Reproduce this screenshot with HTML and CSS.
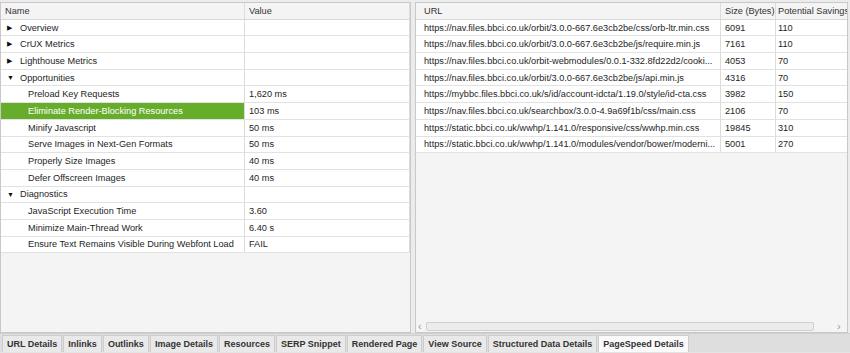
FILE: index.html
```html
<!DOCTYPE html>
<html lang="en">
<head>
  <meta charset="UTF-8" />
  <title>PageSpeed Details</title>
  <link rel="stylesheet" href="styles.css">
</head>
<body>
  <div class="main">
    <div class="panel left">
      <div class="grid tree">
        <div class="row head"><span>Name</span><span>Value</span></div>
        <div class="row"><span class="group"><i class="arrow">&#9654;</i>Overview</span><span></span></div>
        <div class="row"><span class="group"><i class="arrow">&#9654;</i>CrUX Metrics</span><span></span></div>
        <div class="row"><span class="group"><i class="arrow">&#9654;</i>Lighthouse Metrics</span><span></span></div>
        <div class="row"><span class="group"><i class="arrow down">&#9660;</i>Opportunities</span><span></span></div>
        <div class="row"><span class="child">Preload Key Requests</span><span>1,620 ms</span></div>
        <div class="row"><span class="child selected">Eliminate Render-Blocking Resources</span><span>103 ms</span></div>
        <div class="row"><span class="child">Minify Javascript</span><span>50 ms</span></div>
        <div class="row"><span class="child">Serve Images in Next-Gen Formats</span><span>50 ms</span></div>
        <div class="row"><span class="child">Properly Size Images</span><span>40 ms</span></div>
        <div class="row"><span class="child">Defer Offscreen Images</span><span>40 ms</span></div>
        <div class="row"><span class="group"><i class="arrow down">&#9660;</i>Diagnostics</span><span></span></div>
        <div class="row"><span class="child">JavaScript Execution Time</span><span>3.60</span></div>
        <div class="row"><span class="child">Minimize Main-Thread Work</span><span>6.40 s</span></div>
        <div class="row"><span class="child">Ensure Text Remains Visible During Webfont Load</span><span>FAIL</span></div>
      </div>
    </div>

    <div class="panel right">
      <div class="grid urls">
        <div class="row head"><span>URL</span><span>Size (Bytes)</span><span>Potential Savings</span></div>
        <div class="row"><span>https://nav.files.bbci.co.uk/orbit/3.0.0-667.6e3cb2be/css/orb-ltr.min.css</span><span>6091</span><span>110</span></div>
        <div class="row"><span>https://nav.files.bbci.co.uk/orbit/3.0.0-667.6e3cb2be/js/require.min.js</span><span>7161</span><span>110</span></div>
        <div class="row"><span>https://nav.files.bbci.co.uk/orbit-webmodules/0.0.1-332.8fd22d2/cooki...</span><span>4053</span><span>70</span></div>
        <div class="row"><span>https://nav.files.bbci.co.uk/orbit/3.0.0-667.6e3cb2be/js/api.min.js</span><span>4316</span><span>70</span></div>
        <div class="row"><span>https://mybbc.files.bbci.co.uk/s/id/account-idcta/1.19.0/style/id-cta.css</span><span>3982</span><span>150</span></div>
        <div class="row"><span>https://nav.files.bbci.co.uk/searchbox/3.0.0-4.9a69f1b/css/main.css</span><span>2106</span><span>70</span></div>
        <div class="row"><span>https://static.bbci.co.uk/wwhp/1.141.0/responsive/css/wwhp.min.css</span><span>19845</span><span>310</span></div>
        <div class="row"><span>https://static.bbci.co.uk/wwhp/1.141.0/modules/vendor/bower/moderni...</span><span>5001</span><span>270</span></div>
      </div>
      <div class="hscroll">
        <span class="sarrow">&#8249;</span>
        <div class="track"><div class="thumb"></div></div>
        <span class="sarrow">&#8250;</span>
      </div>
    </div>
  </div>

  <div class="tabs">
    <span class="tab">URL Details</span>
    <span class="tab">Inlinks</span>
    <span class="tab">Outlinks</span>
    <span class="tab">Image Details</span>
    <span class="tab">Resources</span>
    <span class="tab">SERP Snippet</span>
    <span class="tab">Rendered Page</span>
    <span class="tab">View Source</span>
    <span class="tab">Structured Data Details</span>
    <span class="tab tab-active">PageSpeed Details</span>
  </div>
</body>
</html>
```

FILE: styles.css
```css
body {
  margin: 0;
  width: 850px;
  height: 353px;
  overflow: hidden;
  background: #e4e4e4;
  font-family: 'Liberation Sans', Arial, sans-serif;
  font-size: 9.2px;
  color: #1e1e1e;
}
.main {
  display: flex;
  height: 333px;
  gap: 4px;
  padding-top: 2px;
  box-sizing: border-box;
  background: #ececec;
}
.panel {
  background: #f4f4f4;
  border: 1px solid #c8c8c8;
  display: flex;
  flex-direction: column;
}
.left {
  width: 409px;
}
.right {
  flex: 1;
  margin-right: 2px;
}
.grid .row {
  display: grid;
  height: 16.7px;
  align-items: center;
  background: #fff;
  border-bottom: 1px solid #e2e2e2;
  box-sizing: border-box;
}
.grid .row span {
  height: 100%;
  display: flex;
  align-items: center;
  white-space: nowrap;
  overflow: hidden;
  border-right: 1px solid #dcdcdc;
  box-sizing: border-box;
  padding-left: 4px;
}
.grid .row.head {
  background: #f4f4f4;
  color: #333;
  border-bottom: 1px solid #d8d8d8;
}
.tree .row {
  grid-template-columns: 244px 1fr;
}
.urls .row {
  grid-template-columns: 305px 55px 1fr;
}
.urls .row span:first-child {
  padding-left: 8px;
}
.urls .row span:last-child {
  padding-left: 2px;
  border-right: none;
}
.tree .row span.group {
  padding-left: 6px;
}
.tree .row span.child {
  padding-left: 27px;
}
.tree .row span.selected {
  background: #67ad2c;
  color: #fff;
}
.arrow {
  font-style: normal;
  font-size: 7px;
  width: 13px;
  color: #111;
}
.hscroll {
  margin-top: auto;
  display: flex;
  align-items: center;
  height: 11px;
  padding: 0 2px 1px;
  color: #999;
}
.sarrow {
  font-size: 11px;
  width: 8px;
  line-height: 10px;
}
.track {
  flex: 1;
  height: 8px;
}
.thumb {
  width: 94%;
  height: 7px;
  border: 1px solid #cfcfcf;
  border-radius: 2px;
  background: #ececec;
}
.tabs {
  display: flex;
  gap: 1px;
  padding: 1px 0 0 2px;
  height: 19px;
  box-sizing: border-box;
  background: #dedede;
  border-top: 1px solid #cfcfcf;
}
.tab {
  font-weight: bold;
  font-size: 9px;
  padding: 0 4px;
  line-height: 17px;
  background: #e9e9e9;
  border: 1px solid #cdcdcd;
  border-bottom: none;
  color: #333;
}
.tab-active {
  background: #fafafa;
}
```
